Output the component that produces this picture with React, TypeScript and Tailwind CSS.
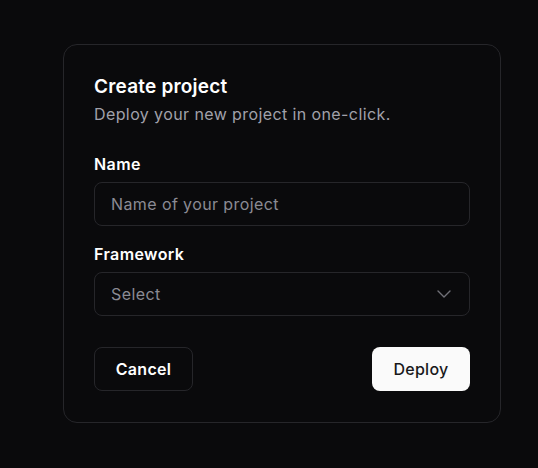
import { ChevronDown } from "lucide-react";

export default function App() {
  return (
    <div
      className="min-h-screen bg-[#0a0a0c] pt-[44px] pl-[63px]"
      style={{ fontFamily: "Inter, 'Noto Sans', sans-serif" }}
    >
      <div className="w-[438px] h-[379px] rounded-[14px] border border-[#26262a] bg-[#0a0a0c] px-[30px] pt-[30px]">
        <h1 className="text-[19px] leading-[24px] font-semibold tracking-[0.2px] text-white">Create project</h1>
        <p className="mt-[3px] text-[16px] leading-6 tracking-[0.4px] text-[#a1a1aa]">
          Deploy your new project in one-click.
        </p>

        <div className="mt-[26px] flex flex-col gap-[6px]">
          <label className="text-[16px] leading-6 font-semibold tracking-[0.4px] text-white">Name</label>
          <div className="h-[44px] rounded-lg border border-[#26262a] px-4 flex items-center text-[16px] tracking-[0.4px] text-[#8b8b94]">
            Name of your project
          </div>
        </div>

        <div className="mt-[16px] flex flex-col gap-[6px]">
          <label className="text-[16px] leading-6 font-semibold tracking-[0.4px] text-white">Framework</label>
          <div className="h-[44px] rounded-lg border border-[#26262a] pl-4 pr-[13px] flex items-center justify-between text-[16px] tracking-[0.4px] text-[#8b8b94]">
            <span>Select</span>
            <ChevronDown size={24} strokeWidth={1.4} className="text-[#707078]" />
          </div>
        </div>

        <div className="mt-[31px] flex justify-between">
          <button className="h-[44px] w-[99px] rounded-lg border border-[#26262a] text-[16px] font-semibold tracking-[0.3px] text-white">
            Cancel
          </button>
          <button className="h-[44px] w-[98px] rounded-lg bg-[#fafafa] text-[16px] font-medium tracking-[0.3px] text-[#18181b]">
            Deploy
          </button>
        </div>
      </div>
    </div>
  );
}
